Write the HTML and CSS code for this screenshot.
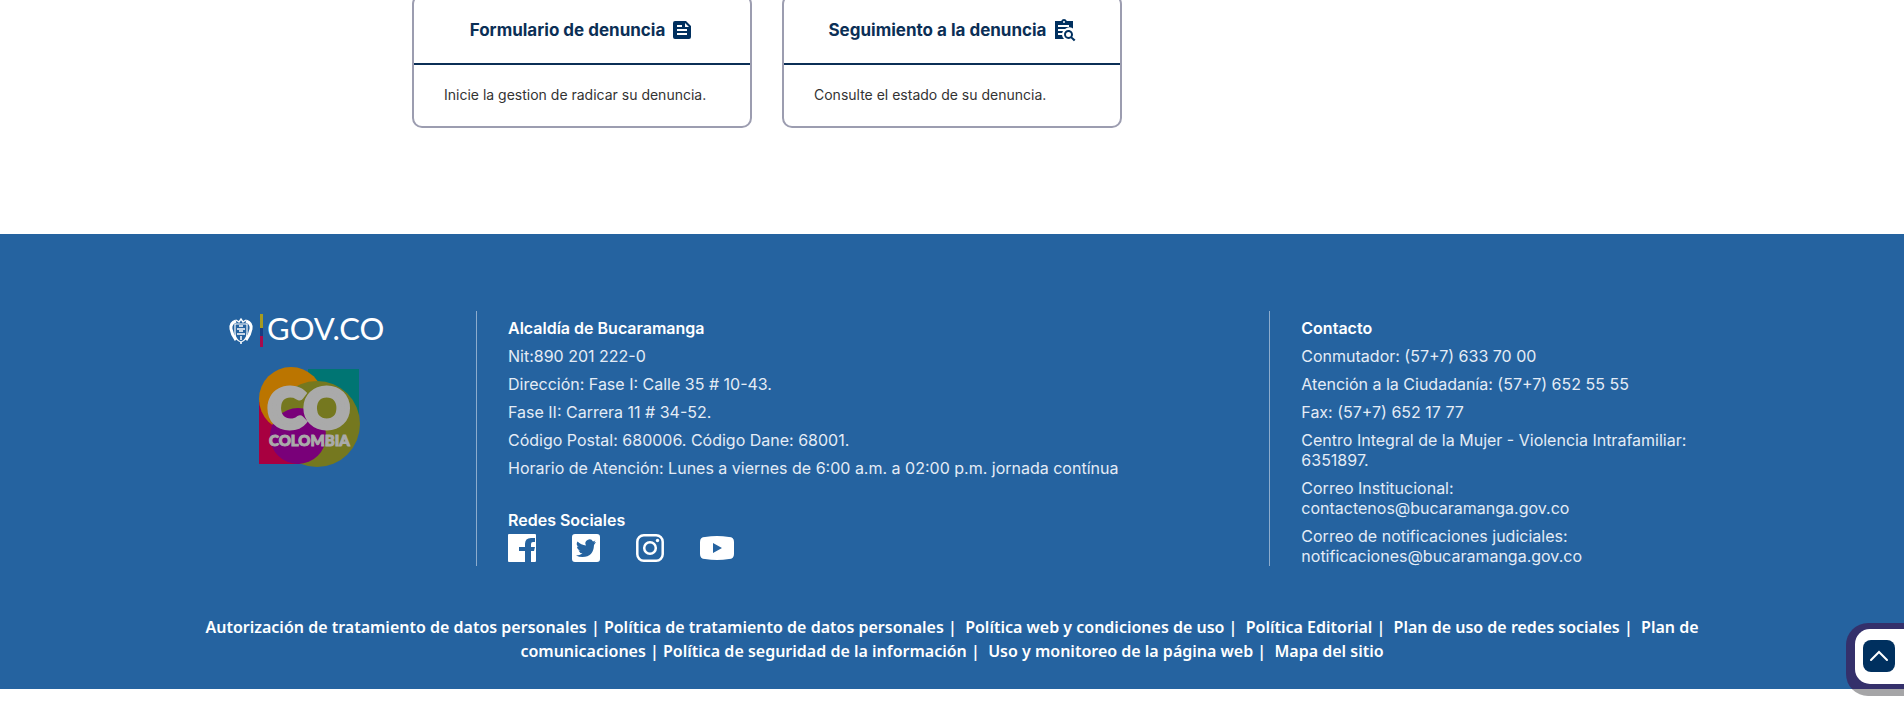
FILE: index.html
```html
<!DOCTYPE html>
<html lang="es">
<head>
<meta charset="utf-8">
<meta name="viewport" content="width=device-width, initial-scale=1">
<title>Denuncias - Alcaldía de Bucaramanga</title>
<link rel="stylesheet" href="styles.css">
</head>
<body>
<main class="cards">
  <article class="card">
    <h2 class="card-title">Formulario de denuncia
      <svg class="card-icon" viewBox="0 0 24 24" aria-hidden="true"><path d="M16 3H5a2 2 0 0 0-2 2v14a2 2 0 0 0 2 2h14a2 2 0 0 0 2-2V8zM7 7h5v2H7zm10 10H7v-2h10zm0-4H7v-2h10zm-2-4V5l4 4z"/></svg>
    </h2>
    <p class="card-text">Inicie la gestion de radicar su denuncia.</p>
  </article>
  <article class="card">
    <h2 class="card-title">Seguimiento a la denuncia
      <svg class="card-icon" viewBox="0 0 24 24" aria-hidden="true"><path d="M20 3h-5.200a3 3 0 0 0-5.600 0H3v18h9a6.500 6.500 0 0 1-2-4H6v-2h4.200a6 6 0 0 1 .8-2H6v-2h7a6.500 6.500 0 0 1 8-.5V3zm-8 0a1 1 0 1 1 0 2 1 1 0 0 1 0-2zm5 6H6V7h11z"/><path d="M20.300 18.900a4.500 4.500 0 1 0-1.400 1.400l3 3 1.600-1.600zM16.500 19a2.500 2.500 0 1 1 0-5 2.500 2.500 0 0 1 0 5z"/></svg>
    </h2>
    <p class="card-text">Consulte el estado de su denuncia.</p>
  </article>
</main>
<footer class="footer">
  <div class="footer-columns">
    <div class="logos">
      <svg class="gov-logo" viewBox="0 0 160 36" role="img" aria-label="GOV.CO">
        <g fill="none" stroke="#fff" stroke-width="1.500">
          <path d="M6 10v9q0 7 6 9 6-2 6-9v-9z" stroke-width="1.200"/>
          <path d="M7 7Q1 9 2 15t5 11M17 7q6 2 5 8t-5 11" stroke-width="3"/>
          <path d="M7 6l3 2 2-3 2 3 3-2M8 15h8M8 20h8M10 12h4M10 17h4M12 22v4M11 29h2"/>
        </g>
        <path d="M31 0h3v14h-3z" fill="#a69b20"/><path d="M31 14h3v8h-3z" fill="#173e83"/><path d="M31 22h3v11h-3z" fill="#a80a4c"/>
        <text class="gov-word" x="38" y="26">GOV.CO</text>
      </svg>
      <svg class="co-logo" viewBox="0 0 102 102" role="img" aria-label="CO Colombia">
        <path d="M50 3h51v52H50z" fill="#007573"/><path d="M1 36h45v62H1z" fill="#a80040"/>
        <circle cx="33" cy="33" r="32" fill="#bb7500"/>
        <circle cx="59" cy="58" r="43" fill="#75781f"/>
        <circle cx="40" cy="70" r="28" fill="#790079"/>
        <text class="co-word" x="10" y="62">CO</text>
        <text class="colombia-word" x="11" y="80">COLOMBIA</text>
      </svg>
    </div>
    <address class="column">
      <h3>Alcaldía de Bucaramanga</h3>
      <p>Nit:890 201 222-0</p>
      <p>Dirección: Fase I: Calle 35 # 10-43.</p>
      <p>Fase II: Carrera 11 # 34-52.</p>
      <p>Código Postal: 680006. Código Dane: 68001.</p>
      <p>Horario de Atención: Lunes a viernes de 6:00 a.m. a 02:00 p.m. jornada contínua</p>
      <h3 class="social-title">Redes Sociales</h3>
      <nav class="social" aria-label="Redes Sociales">
        <a href="#" aria-label="Facebook"><svg viewBox="0 0 28 28"><path d="M1 0h26q1 0 1 1v26q0 1-1 1h-4V17h3l1-4h-4v-3q0-2 2-2h2V4h-4q-6 0-6 6v3h-6v4h6v11H1q-1 0-1-1V1q0-1 1-1z"/></svg></a>
        <a href="#" aria-label="Twitter"><svg viewBox="0 0 28 28"><path fill-rule="evenodd" d="M3 0h22q3 0 3 3v22q0 3-3 3H3q-3 0-3-3V3q0-3 3-3zm21 8-2 .5 1.500-2-2.500 1a4 4 0 0 0-7 4Q9 11 5.500 7.500q-2 3 1 5.500l-1.500-.5q0 3 3.500 4H6.500q1 2.500 4 3-3 2-6.500 2 3 1.500 6.500 1.500 11 0 11.500-12z"/></svg></a>
        <a href="#" aria-label="Instagram"><svg viewBox="0 0 28 28"><g fill="none" stroke="#fff" stroke-width="2.500"><rect x="1.300" y="1.300" width="25.400" height="25.400" rx="6.500"/><circle cx="14" cy="14" r="5.800"/></g><circle cx="21.500" cy="6.500" r="1.700"/></svg></a>
        <a href="#" aria-label="YouTube"><svg class="youtube" viewBox="0 0 34 28"><path fill-rule="evenodd" d="M5 3Q17 1 29 3q5 0 5 5v12q0 5-5 5-12 2-24 0-5 0-5-5V8q0-5 5-5zm8 6v10l9-5z"/></svg></a>
      </nav>
    </address>
    <address class="column">
      <h3>Contacto</h3>
      <p>Conmutador: (57+7) 633 70 00</p>
      <p>Atención a la Ciudadanía: (57+7) 652 55 55</p>
      <p>Fax: (57+7) 652 17 77</p>
      <p>Centro Integral de la Mujer - Violencia Intrafamiliar: 6351897.</p>
      <p>Correo Institucional:<br>contactenos@bucaramanga.gov.co</p>
      <p>Correo de notificaciones judiciales:<br>notificaciones@bucaramanga.gov.co</p>
    </address>
  </div>
  <nav class="policies" aria-label="Políticas">
    <a href="#">Autorización de tratamiento de datos personales</a> | <a href="#">Política de tratamiento de datos personales</a> |&nbsp; <a href="#">Política web y condiciones de uso</a> |&nbsp; <a href="#">Política Editorial</a> |&nbsp; <a href="#">Plan de uso de redes sociales</a> |&nbsp; <a href="#">Plan de comunicaciones</a> | <a href="#">Política de seguridad de la información</a> |&nbsp; <a href="#">Uso y monitoreo de la página web</a> |&nbsp; <a href="#">Mapa del sitio</a>
  </nav>
</footer>
<div class="to-top">
  <div class="to-top-panel">
    <button class="to-top-button" type="button" aria-label="Volver arriba"><svg viewBox="0 0 32 32"><path d="M8 20l8-8 8 8"/></svg></button>
  </div>
</div>
</body>
</html>
```
FILE: styles.css
```css
* { box-sizing: border-box; }
body { margin: 0; background: #fff; color: #333; font-family: Inter, "Open Sans", sans-serif; font-size: 16px; line-height: 20px; overflow: hidden; }
h2, h3, p { margin: 0; }
a { color: inherit; text-decoration: none; }
.cards { display: grid; grid-template-columns: repeat(3, 1fr); gap: 30px; max-width: 1080px; margin: -6px auto 0; padding-bottom: 106px; }
.card { border: 2px solid #9c9db0; border-radius: 10px; }
.card-title { display: flex; align-items: center; justify-content: center; gap: 5px; height: 69px; border-bottom: 2px solid #0b2f56; color: #0b2f56; font-size: 17px; font-weight: 700; }
.card-icon { width: 24px; height: 24px; fill: #00305f; }
.card-text { padding: 20px 30px 21px; font-size: 14px; }
.footer { background: #2563a0; color: #fff; padding: 77px 0 26px; }
.footer-columns { display: grid; grid-template-columns: 2fr 5fr 3fr; width: 83.333%; margin: 0 auto; }
.logos { display: flex; flex-direction: column; align-items: center; gap: 16px; padding-right: 17px; }
.gov-logo { width: 160px; height: 36px; margin-top: 3px; overflow: visible; }
.gov-word { font: 400 31px Lato, sans-serif; fill: #fff; }
.co-logo { width: 102px; height: 102px; }
.co-word { font: 900 56px Lato, sans-serif; fill: #aaa; stroke: #aaa; stroke-width: 5; }
.colombia-word { font: 900 15px Lato, sans-serif; fill: #aaa; stroke: #aaa; stroke-width: 1; }
.column { border-left: 1px solid #8daccd; padding: 7px 31px 0; font-style: normal; font-weight: 400; color: #e4ecf6; }
.column p { margin-bottom: 8px; }
.column p:last-child { margin-bottom: 0; }
.column h3 { margin-bottom: 8px; font-size: 16px; font-weight: 600; color: #fff; }
.column .social-title { margin: 32px 0 4px; }
.social { display: flex; gap: 36px; height: 28px; }
.social svg { display: block; width: 28px; height: 28px; fill: #fff; }
.social .youtube { width: 34px; }
.policies { max-width: 1580px; margin: 0 auto; padding: 49px 24px 0; text-align: center; font-family: "Noto Sans", sans-serif; font-size: 16px; line-height: 24px; font-weight: 600; }
.to-top { position: fixed; right: 0; bottom: 6px; padding: 6px 0 12px 9px; border-radius: 22px 0 0 22px; background: linear-gradient(#34306b 66px, #a5a5a7 66px); }
.to-top-panel { padding: 11px 9px 12px 8px; border-radius: 15px 0 0 15px; background: #fff; }
.to-top-button { display: block; width: 32px; height: 32px; padding: 0; border: 0; border-radius: 8px; background: #00305f; }
.to-top-button svg { display: block; width: 32px; height: 32px; fill: none; stroke: #fff; stroke-width: 2; stroke-linecap: round; }
```
